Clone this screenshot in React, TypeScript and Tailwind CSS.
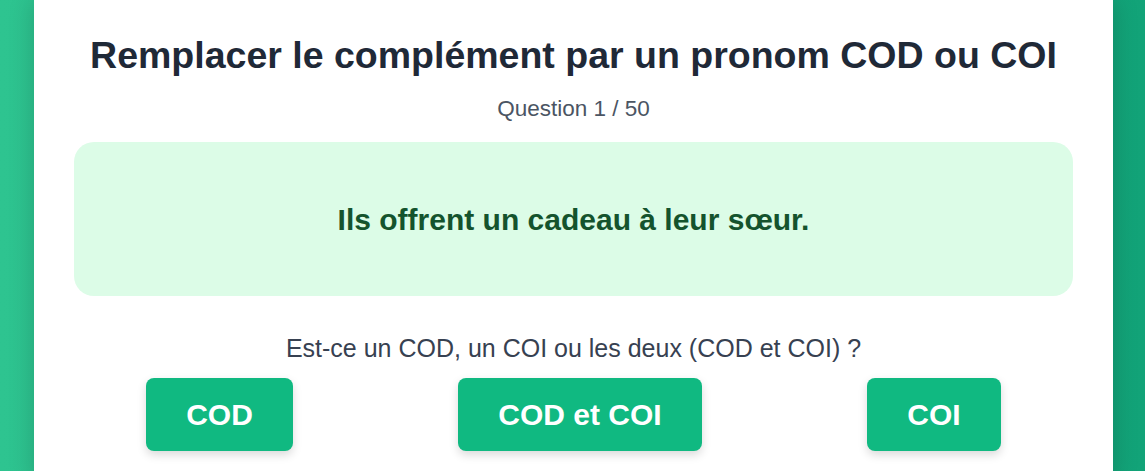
import { useState } from "react";

const CHOICES = [
  { label: "COD", width: "w-[147px]" },
  { label: "COD et COI", width: "w-[244px]" },
  { label: "COI", width: "w-[134px]" },
];

export default function App() {
  const [picked, setPicked] = useState<string | null>(null);

  return (
    <div className="min-h-[471px] bg-[linear-gradient(90deg,#2ec490,#12a378)] pl-[34px] pr-[32px] font-['Liberation_Sans',Arial,sans-serif]">
      <div className="min-h-[471px] bg-white px-10 pt-[33px] pb-8 text-center shadow-[0_0_24px_rgba(0,0,0,0.18)]">
        <h1 className="text-[37.5px] font-bold leading-[45px] text-[#1f2937]">
          Remplacer le complément par un pronom COD ou COI
        </h1>
        <p className="mt-[16px] text-[22.5px] leading-[30px] text-[#4b5563]">Question 1 / 50</p>

        <div className="mt-[18px] flex h-[154px] items-center justify-center rounded-[20px] bg-[#dcfce7]">
          <p className="text-[30px] font-bold text-[#14532d]">Ils offrent un cadeau à leur sœur.</p>
        </div>

        <p className="mt-[36px] text-[25px] leading-[32px] text-[#374151]">
          Est-ce un COD, un COI ou les deux (COD et COI) ?
        </p>

        <div className="mt-[14px] flex justify-center gap-[165px]">
          {CHOICES.map((c) => (
            <button
              key={c.label}
              onClick={() => setPicked(c.label)}
              className={`${c.width} h-[73px] rounded-lg bg-[#10b981] text-[30px] font-bold text-white shadow-[0_4px_10px_rgba(0,0,0,0.15)] ${
                picked === c.label ? "ring-2 ring-emerald-700" : ""
              }`}
            >
              {c.label}
            </button>
          ))}
        </div>
      </div>
    </div>
  );
}
